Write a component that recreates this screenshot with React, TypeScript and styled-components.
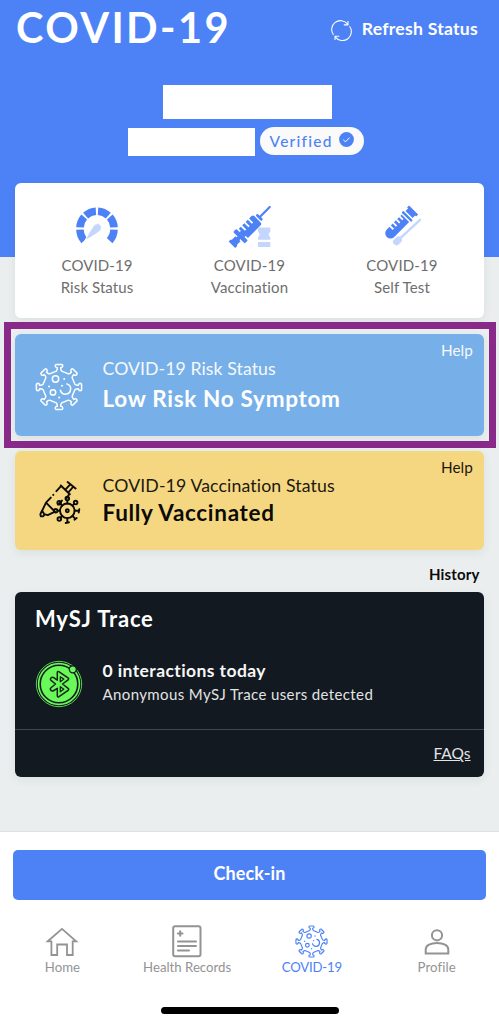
import React from "react";
import styled, { createGlobalStyle, css } from "styled-components";

const blue = "#4d82f7";
const paleBlue = "#c5d6fd";

const GlobalStyle = createGlobalStyle`
  *, *::before, *::after { box-sizing: border-box; }
  body { margin: 0; background: #eaeeef; font-family: Lato, "Liberation Sans", sans-serif; }
`;

type TextProps = { $spacing?: number };
const spacing = css<TextProps>`
  letter-spacing: ${(p) => p.$spacing ?? 0}px;
  font-variant-ligatures: none;
  white-space: nowrap;
`;

const Screen = styled.div`
  width: 100%;
  height: 1024px;
  display: flex;
  flex-direction: column;
  background: #eaeeef;
  overflow: hidden;
`;

const Header = styled.header`
  height: 257px;
  flex: none;
  background: ${blue};
  color: #fff;
`;

const TitleRow = styled.div`
  height: 85px;
  padding: 3px 21px 0 16px;
  display: flex;
  justify-content: space-between;
  align-items: flex-start;
`;

const Title = styled.h1<TextProps>`
  margin: 0;
  font-size: 41.5px;
  line-height: 48px;
  font-weight: 700;
  ${spacing}
`;

const Refresh = styled.button<TextProps>`
  margin: 13px 0 0;
  padding: 0;
  border: 0;
  background: none;
  color: inherit;
  font: 700 17.6px/26px Lato, sans-serif;
  display: flex;
  align-items: center;
  gap: 9.5px;
  ${spacing}
  svg { margin-top: 3px; }
`;

const RedactedName = styled.div`
  width: 169px;
  height: 34px;
  margin: 0 auto 9px 163px;
  background: #fff;
`;

const IdentityRow = styled.div`
  display: flex;
  padding-left: 128px;
  gap: 5px;
  align-items: flex-start;
`;

const RedactedId = styled.div`
  width: 127px;
  height: 28px;
  background: #fff;
`;

const Verified = styled.div<TextProps>`
  width: 103.5px;
  height: 27.5px;
  margin-top: -1px;
  padding: 0 10px 0 9.5px;
  border-radius: 14px;
  background: #fafafa;
  color: ${blue};
  display: flex;
  align-items: center;
  justify-content: space-between;
  font-size: 15.5px;
  font-weight: 500;
  ${spacing}
  svg { margin-bottom: 2px; }
`;

const cardShadow = "0 3px 10px rgba(40, 60, 70, 0.08)";

const TileCard = styled.section`
  flex: none;
  height: 135px;
  margin: -74px 15px 4px;
  border-radius: 6px;
  background: #fff;
  box-shadow: ${cardShadow};
  display: grid;
  grid-template-columns: 158px 1fr 158px;
  padding: 0 3px;
`;

const Tile = styled.div<TextProps>`
  display: flex;
  flex-direction: column;
  align-items: center;
  padding-top: 22px;
  color: #6e6e6e;
  font-size: 15px;
  line-height: 22px;
  text-align: center;
  ${spacing}
  svg { margin-bottom: 5px; }
`;

const Highlight = styled.div`
  flex: none;
  width: 492px;
  height: 126px;
  margin: 0 0 3px 4px;
  padding: 5px 5px 5px 4px;
  border: 7px solid #892a8b;
`;

type Tone = "risk" | "vaccine";

const StatusCard = styled.section<{ $tone: Tone }>`
  flex: none;
  width: 469px;
  height: ${(p) => (p.$tone === "risk" ? 102 : 99)}px;
  margin-left: ${(p) => (p.$tone === "risk" ? 0 : 15)}px;
  padding: 5px 11px 0 20px;
  border-radius: 6px;
  display: grid;
  grid-template-columns: 67.5px 1fr auto;
  background: ${(p) => (p.$tone === "risk" ? "#77b0e8" : "#f6d781")};
  color: ${(p) => (p.$tone === "risk" ? "#fff" : "#0b0b08")};
  box-shadow: ${cardShadow};
`;

const StatusIcon = styled.div`
  padding: 24px 0 0 0;
`;

const RiskIcon = styled(StatusIcon)`
  padding: 24px 0 0 0;
`;

const StatusText = styled.div`
  padding-top: 17px;
`;

const StatusLabel = styled.div<TextProps>`
  font-size: 17.7px;
  line-height: 26px;
  opacity: 0.93;
  ${spacing}
`;

const StatusValue = styled.div<TextProps & { $tone: Tone }>`
  font-size: 22.5px;
  font-weight: 700;
  line-height: ${(p) => (p.$tone === "risk" ? 33 : 28)}px;
  ${spacing}
`;

const Help = styled.span<TextProps>`
  font-size: 15.3px;
  line-height: 23px;
  opacity: 0.93;
  ${spacing}
`;

const History = styled.div<TextProps>`
  flex: none;
  height: 42px;
  padding: 14px 19.5px 0 0;
  text-align: right;
  font-size: 15px;
  font-weight: 700;
  line-height: 21px;
  color: #0b0b0b;
  ${spacing}
`;

const TraceCard = styled.section`
  flex: none;
  height: 185px;
  margin: 0 15px;
  border-radius: 6px;
  background: #121920;
  color: #fff;
  box-shadow: ${cardShadow};
`;

const TraceMain = styled.div`
  height: 138px;
  padding: 11px 20px 0;
  border-bottom: 1px solid #42484d;
`;

const TraceTitle = styled.h2<TextProps>`
  margin: 0 0 17px;
  font-size: 22px;
  line-height: 32px;
  font-weight: 700;
  ${spacing}
`;

const TraceRow = styled.div`
  display: grid;
  grid-template-columns: 67.5px 1fr;
  align-items: start;
  svg { margin-top: 8px; }
`;

const TraceCount = styled.div<TextProps>`
  margin-top: 6px;
  font-size: 17.5px;
  line-height: 25px;
  font-weight: 700;
  color: #f7f7f7;
  ${spacing}
`;

const TraceDetail = styled.div<TextProps>`
  font-size: 15px;
  line-height: 22px;
  color: #e2e3e4;
  ${spacing}
`;

const Faq = styled.div<TextProps>`
  padding: 11px 13.5px 0 0;
  text-align: right;
  font-size: 15.5px;
  line-height: 24px;
  color: #e2e3e4;
  text-decoration: underline;
  text-underline-offset: 1px;
  ${spacing}
`;

const BottomBar = styled.footer`
  height: 193px;
  flex: none;
  margin-top: auto;
  padding: 18px 13px 0;
  border-top: 1px solid #dfe2e3;
  background: #fff;
`;

const CheckIn = styled.button<TextProps>`
  display: block;
  width: 100%;
  height: 50px;
  padding: 0 0 5px;
  border: 0;
  border-radius: 5px;
  background: ${blue};
  color: #fff;
  font: 700 18px/26px Lato, sans-serif;
  ${spacing}
`;

const Nav = styled.nav`
  display: grid;
  grid-template-columns: repeat(4, 1fr);
  margin: 24px -13px 0;
`;

const NavItem = styled.div<TextProps & { $active?: boolean }>`
  display: flex;
  flex-direction: column;
  align-items: center;
  color: ${(p) => (p.$active ? blue : "#939393")};
  font-size: 13.2px;
  line-height: 19px;
  ${spacing}
`;

const HomeIndicator = styled.div`
  width: 178px;
  height: 7px;
  margin: 30px auto 0;
  border-radius: 4px;
  background: #000;
`;

/* Outline of a round body with eight capped spikes, centred on 24,24. */
function spikedOutline(): string {
  const parts: string[] = [];
  for (let k = 0; k < 8; k++) {
    const a = (k * Math.PI) / 4 - Math.PI / 2;
    const at = (r: number, t: number) =>
      `${(24 + r * Math.cos(a) - t * Math.sin(a)).toFixed(2)} ${(24 + r * Math.sin(a) + t * Math.cos(a)).toFixed(2)}`;
    parts.push(`${k === 0 ? "M" : "L"}${at(15.9, -2.7)}`);
    parts.push(`Q${at(17, -1.6)} ${at(19.3, -1.7)}`);
    parts.push(`Q${at(19.6, -3.7)} ${at(21, -3.8)} Q${at(22.6, -3.8)} ${at(22.6, -2.6)}`);
    parts.push(`L${at(22.6, 2.6)} Q${at(22.6, 3.8)} ${at(21, 3.8)} Q${at(19.6, 3.7)} ${at(19.3, 1.7)}`);
    parts.push(`Q${at(17, 1.6)} ${at(15.9, 2.7)}`);
  }
  return parts.join(" ") + "Z";
}
const virusPath = spikedOutline();

const VirusIcon = ({ size, stroke = 1.5 }: { size: number; stroke?: number }) => (
  <svg width={size} height={size} viewBox="0 0 48 48" fill="none" stroke="currentColor" strokeWidth={stroke} strokeLinejoin="round" strokeLinecap="round">
    <path d={virusPath} />
    <circle cx="20.5" cy="16" r="3.2" />
    <circle cx="18" cy="29.4" r="2.7" />
    <path d="M31.8 20.9A5.2 5.2 0 1 1 25.4 27.2" />
    <g fill="currentColor" stroke="none">
      <circle cx="29.2" cy="16" r="1" />
      <circle cx="14" cy="23.6" r="1" />
      <circle cx="27" cy="22.8" r="1" />
      <circle cx="24.2" cy="34.5" r="1" />
    </g>
  </svg>
);

const RefreshIcon = () => (
  <svg width="21" height="21" viewBox="0 0 22 22" fill="none" stroke="currentColor" strokeWidth="1.1">
    <path d="M2.6 15.6A9 9 0 0 1 17.4 4.3M17.8 1V5.1H13.4" />
    <path d="M19.4 6.6A9 9 0 0 1 4.6 17.9M4.2 21V17H8.6" />
  </svg>
);

const CheckBadge = () => (
  <svg width="15" height="15" viewBox="0 0 15 15">
    <circle cx="7.5" cy="7.5" r="7.4" fill={blue} />
    <path d="M4.3 7.8l2.2 2 4.2-4.3" fill="none" stroke="#fff" strokeWidth="1" />
  </svg>
);

const GaugeIcon = () => (
  <svg width="44" height="44" viewBox="0 0 44 44">
    <g transform="translate(-.4 1)">
      <g fill="none" stroke={blue} strokeWidth="7.6">
        <path d="M9.7 34.6A17 17 0 0 1 5.4 23.6" />
        <path d="M5.4 21.4A17 17 0 0 1 9.6 11.1" />
        <path d="M11 9.6A17 17 0 0 1 21.3 5.3" />
        <path d="M23.4 5.3A17 17 0 0 1 33.7 9.6" />
        <path d="M35.2 11.1A17 17 0 0 1 39.4 21.4" />
        <path d="M39.4 23.6A17 17 0 0 1 35 34.6" />
      </g>
      <path d="M18.6 20.4Q20.6 17.2 23 17.6C26.4 18 27.8 21.4 26.2 24Q24.8 26.4 10.2 34.8Q14.6 25.6 18.6 20.4Z" fill={paleBlue} stroke="#fff" strokeWidth="1" strokeLinejoin="round" />
    </g>
  </svg>
);

const VaccineIcon = () => (
  <svg width="44" height="44" viewBox="0 0 44 44">
    <g transform="translate(23 20.7) rotate(-45)" fill={blue}>
      <path d="M-27 -4.6h2.6l1 1h5v7.2h-5l-1 1H-27z" />
      <rect x="-19.5" y="-2" width="4" height="4" />
      <rect x="-17" y="-8.2" width="4.4" height="16.4" rx="1" />
      <path d="M-10.8 -6.5h2.9v5.8h1.9v-5.8h3v5.8h1.9v-5.8h3v5.8h1.9v-5.8h3.3q2 0 2 2v9q0 2-2 2h-17.9z" />
      <rect x="-13" y="-3.5" width="3" height="7" />
      <rect x="10.5" y="-4" width="2.6" height="8" rx="1" />
      <rect x="12.5" y="-1.1" width="15" height="2.2" rx="1" />
    </g>
    <path d="M30 22.5h12.3v4L40.5 29.5l1.8 3v2.2H30v-2.2l1.8-3L30 26.5zM30 37h12.3v5H30z" fill={paleBlue} />
  </svg>
);

const TestIcon = () => (
  <svg width="44" height="44" viewBox="0 0 44 44">
    <g transform="translate(20 18.6) rotate(-45)" fill={blue}>
      <path d="M-13.5 -5.2H-9.6v4.5h1.8V-5.2h2.7v4.5h1.8V-5.2h2.7v4.5h1.8V-5.2h2.7v4.5h1.8V-5.2H7.5V5.4H-13.5a5.3 5.3 0 0 1 0-10.6z" />
      <rect x="9" y="-6.8" width="2.4" height="13.6" rx="1" />
      <path d="M12.8 -5h3.6v-1.4h2.8v12.8h-2.8V5h-3.6z" />
    </g>
    <g transform="translate(17.5 35.8) rotate(-43)" fill={paleBlue}>
      <rect x="-4.8" y="-3.5" width="9.5" height="7" rx="3.5" />
      <rect x="2" y="-1.2" width="30" height="2.4" rx="1.2" />
    </g>
  </svg>
);

const SyringeVirusIcon = () => (
  <svg width="48" height="48" viewBox="0 0 48 48" fill="none" stroke="currentColor" strokeWidth="1.9" strokeLinecap="round" strokeLinejoin="round">
    <path d="M32.6 2l8 6.5M35 4.6l-4.6 5M38 7l-4.4 5.2M25.8 5.5l9 8.8M26 6.2l-4.6 5M18.3 14.8v.2M15.8 17.6l-4.8 5-3.8 8 2 3.6 3.6 1 7.2-3.6M11 22.6l8.3 8.4M7 30.6l-1.6 3.6.4 2 2.2.2 1.6-1.8M34 14.5l-2.6 4M27 20.6l-4 4" />
    <g transform="translate(.3 -2.2)">
      <circle cx="32" cy="33" r="7.3" />
      <circle cx="32" cy="33" r="1.5" />
      <path d="M32 25.7v-3M26.9 27.9L25.2 26.2M24.7 33h-2.5M26.9 38.1l-1.7 1.7M32 40.3v4M37.1 38.1l3 3M39.3 33h4M37.1 27.9l1.9-1.9M30.4 45.2l3.2-.7M44 31.4l-.6 3.3M39.2 41.9l2.2-1.7" />
      <circle cx="32" cy="20.8" r="1.8" />
      <circle cx="23.9" cy="24.9" r="1.8" />
      <circle cx="20.4" cy="33" r="1.8" />
      <circle cx="24" cy="41.2" r="1.8" />
      <circle cx="40.3" cy="24.8" r="1.8" />
    </g>
  </svg>
);

const BluetoothIcon = () => (
  <svg width="48" height="48" viewBox="0 0 48 48" fill="none">
    <circle cx="24" cy="24" r="22.7" stroke="#58cf4b" strokeWidth="1" />
    <circle cx="24" cy="24" r="20.4" stroke="#69f958" strokeWidth="1.6" />
    <circle cx="24" cy="24" r="18" fill="#69f958" />
    <circle cx="37.8" cy="9.3" r="3.5" fill="#69f958" stroke="#121920" strokeWidth="1.3" />
    <path d="M22.3 12.2q.3-1.2 1.5-.6L33 17.8q1.4 1 .1 2L27.5 24l5.6 4.3q1.3 1 0 2L24 36.7q-1.5.7-1.7-.9V28.3L18 31q-2.2.2-2.7-1.8 0-1 .7-1.4L20.5 24 16 20.3q-1.3-1.2.2-2.6 1.2-1 2.5-.1l3.6 2.5z" stroke="#142518" strokeWidth="1.5" strokeLinejoin="round" />
    <path d="M25.3 16.8l3.5 2.3-3.5 2.6zM25.3 26.7l3.5 2.5-3.5 2.6z" stroke="#142518" strokeWidth="1.3" strokeLinejoin="round" />
  </svg>
);

const HomeIcon = () => (
  <svg width="34" height="34" viewBox="0 0 34 34" fill="none" stroke="currentColor" strokeWidth="1.8">
    <path d="M2.8 17.3L17 4.9l14.2 12.4H27.7V31H22V20.5H12.2V31H6.4V17.3z" />
  </svg>
);

const RecordsIcon = () => (
  <svg width="34" height="34" viewBox="0 0 34 34" fill="none" stroke="currentColor" strokeWidth="2" strokeLinecap="round">
    <rect x="3.2" y="2.3" width="27.3" height="30" rx="2" />
    <path d="M7.9 9.5h4.6M10.2 7.2v4.6M8 17.5h18M8 22h18M8 26.5h11" />
  </svg>
);

const ProfileIcon = () => (
  <svg width="34" height="34" viewBox="0 0 34 34" fill="none" stroke="currentColor" strokeWidth="2">
    <circle cx="17" cy="11.3" r="5.1" />
    <path d="M5.7 29.6v-4.2c0-4 5-6.4 11.3-6.4s11.3 2.4 11.3 6.4v4.2z" />
  </svg>
);

const ActiveIcon = styled.div`
  height: 34px;
  padding-top: 1px;
`;

export default function App() {
  return (
    <>
      <GlobalStyle />
      <Screen>
        <Header>
          <TitleRow>
            <Title $spacing={2.4}>COVID-19</Title>
            <Refresh $spacing={0.25}>
              <RefreshIcon />
              Refresh Status
            </Refresh>
          </TitleRow>
          <RedactedName />
          <IdentityRow>
            <RedactedId />
            <Verified $spacing={1.25}>
              Verified
              <CheckBadge />
            </Verified>
          </IdentityRow>
        </Header>
        <TileCard>
          <Tile $spacing={0.08}><GaugeIcon /><span>COVID-19<br />Risk Status</span></Tile>
          <Tile $spacing={0.15}><VaccineIcon /><span>COVID-19<br />Vaccination</span></Tile>
          <Tile $spacing={0.15}><TestIcon /><span>COVID-19<br />Self Test</span></Tile>
        </TileCard>
        <Highlight>
          <StatusCard $tone="risk">
            <RiskIcon><VirusIcon size={48} /></RiskIcon>
            <StatusText>
              <StatusLabel $spacing={0.07}>COVID-19 Risk Status</StatusLabel>
              <StatusValue $tone="risk" $spacing={0.7}>Low Risk No Symptom</StatusValue>
            </StatusText>
            <Help $spacing={0.1}>Help</Help>
          </StatusCard>
        </Highlight>
        <StatusCard $tone="vaccine">
          <StatusIcon><SyringeVirusIcon /></StatusIcon>
          <StatusText>
            <StatusLabel $spacing={0.13}>COVID-19 Vaccination Status</StatusLabel>
            <StatusValue $tone="vaccine" $spacing={0.68}>Fully Vaccinated</StatusValue>
          </StatusText>
          <Help $spacing={0.1}>Help</Help>
        </StatusCard>
        <History $spacing={0.15}>History</History>
        <TraceCard>
          <TraceMain>
            <TraceTitle $spacing={0.8}>MySJ Trace</TraceTitle>
            <TraceRow>
              <BluetoothIcon />
              <div>
                <TraceCount $spacing={0.41}>0 interactions today</TraceCount>
                <TraceDetail $spacing={0.38}>Anonymous MySJ Trace users detected</TraceDetail>
              </div>
            </TraceRow>
          </TraceMain>
          <Faq>FAQs</Faq>
        </TraceCard>
        <BottomBar>
          <CheckIn $spacing={0.1}>Check-in</CheckIn>
          <Nav>
            <NavItem><HomeIcon />Home</NavItem>
            <NavItem><RecordsIcon />Health Records</NavItem>
            <NavItem $active $spacing={-0.2}><ActiveIcon><VirusIcon size={33} stroke={1.7} /></ActiveIcon>COVID-19</NavItem>
            <NavItem $spacing={0.1}><ProfileIcon />Profile</NavItem>
          </Nav>
          <HomeIndicator />
        </BottomBar>
      </Screen>
    </>
  );
}
